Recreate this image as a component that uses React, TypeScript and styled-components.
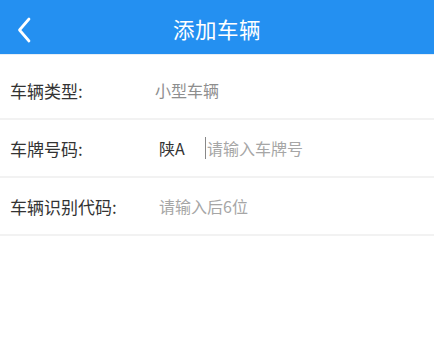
import React from 'react';
import styled, { createGlobalStyle } from 'styled-components';

const GlobalStyle = createGlobalStyle`
  html, body {
    margin: 0;
    padding: 0;
    background: #ffffff;
    font-family: "Noto Sans CJK SC", "Noto Sans", sans-serif;
  }
`;

const Page = styled.div`
  width: 434px;
  min-height: 337px;
  background: #ffffff;
`;

const Header = styled.header`
  height: 54px;
  background: #2490f1;
  border-bottom: 1px solid #e6eef6;
  display: flex;
  align-items: center;
  justify-content: center;
  position: relative;
`;

const BackButton = styled.button`
  position: absolute;
  left: 13px;
  top: 16px;
  width: 22px;
  height: 28px;
  padding: 0;
  border: none;
  background: none;
  display: flex;
  align-items: center;
  justify-content: center;
`;

const Title = styled.h1`
  margin: 0;
  padding-top: 3px;
  color: #ffffff;
  font-size: 21.5px;
  font-weight: 400;
  letter-spacing: 0.5px;
`;

const Form = styled.div`
  margin-top: 7px;
`;

const Row = styled.div`
  height: 56px;
  display: flex;
  align-items: center;
  padding-left: 10px;
  border-bottom: 2px solid #f2f2f2;
`;

const Label = styled.span`
  width: 145px;
  font-size: 17px;
  color: #333333;
`;

const Value = styled.span`
  font-size: 16px;
  color: #8e8e8e;
`;

const Prefix = styled.span`
  margin-left: 4px;
  font-size: 16px;
  color: #333333;
  width: 46px;
`;

const Input = styled.input<{ $offset?: number }>`
  margin-left: ${p => p.$offset ?? 0}px;
  border: none;
  outline: none;
  padding: 0 0 0 1px;
  border-left: 1px solid #888;
  font-family: inherit;
  font-size: 16px;
  color: #333;
  background: transparent;
  width: 180px;
  line-height: 22px;
  &::placeholder {
    color: #a6a6a6;
  }
`;

const PlainInput = styled(Input)`
  border-left: none;
`;

export default function App() {
  return (
    <Page>
      <GlobalStyle />
      <Header>
        <BackButton aria-label="返回">
          <svg width="16" height="26" viewBox="0 0 16 26">
            <path d="M13 2 L3.5 13 L13 24" fill="none" stroke="#fff" strokeWidth="2.7" strokeLinecap="round" strokeLinejoin="round" />
          </svg>
        </BackButton>
        <Title>添加车辆</Title>
      </Header>
      <Form>
        <Row>
          <Label>车辆类型:</Label>
          <Value>小型车辆</Value>
        </Row>
        <Row>
          <Label>车牌号码:</Label>
          <Prefix>陕A</Prefix>
          <Input placeholder="请输入车牌号" />
        </Row>
        <Row>
          <Label>车辆识别代码:</Label>
          <PlainInput $offset={3} placeholder="请输入后6位" />
        </Row>
      </Form>
    </Page>
  );
}
